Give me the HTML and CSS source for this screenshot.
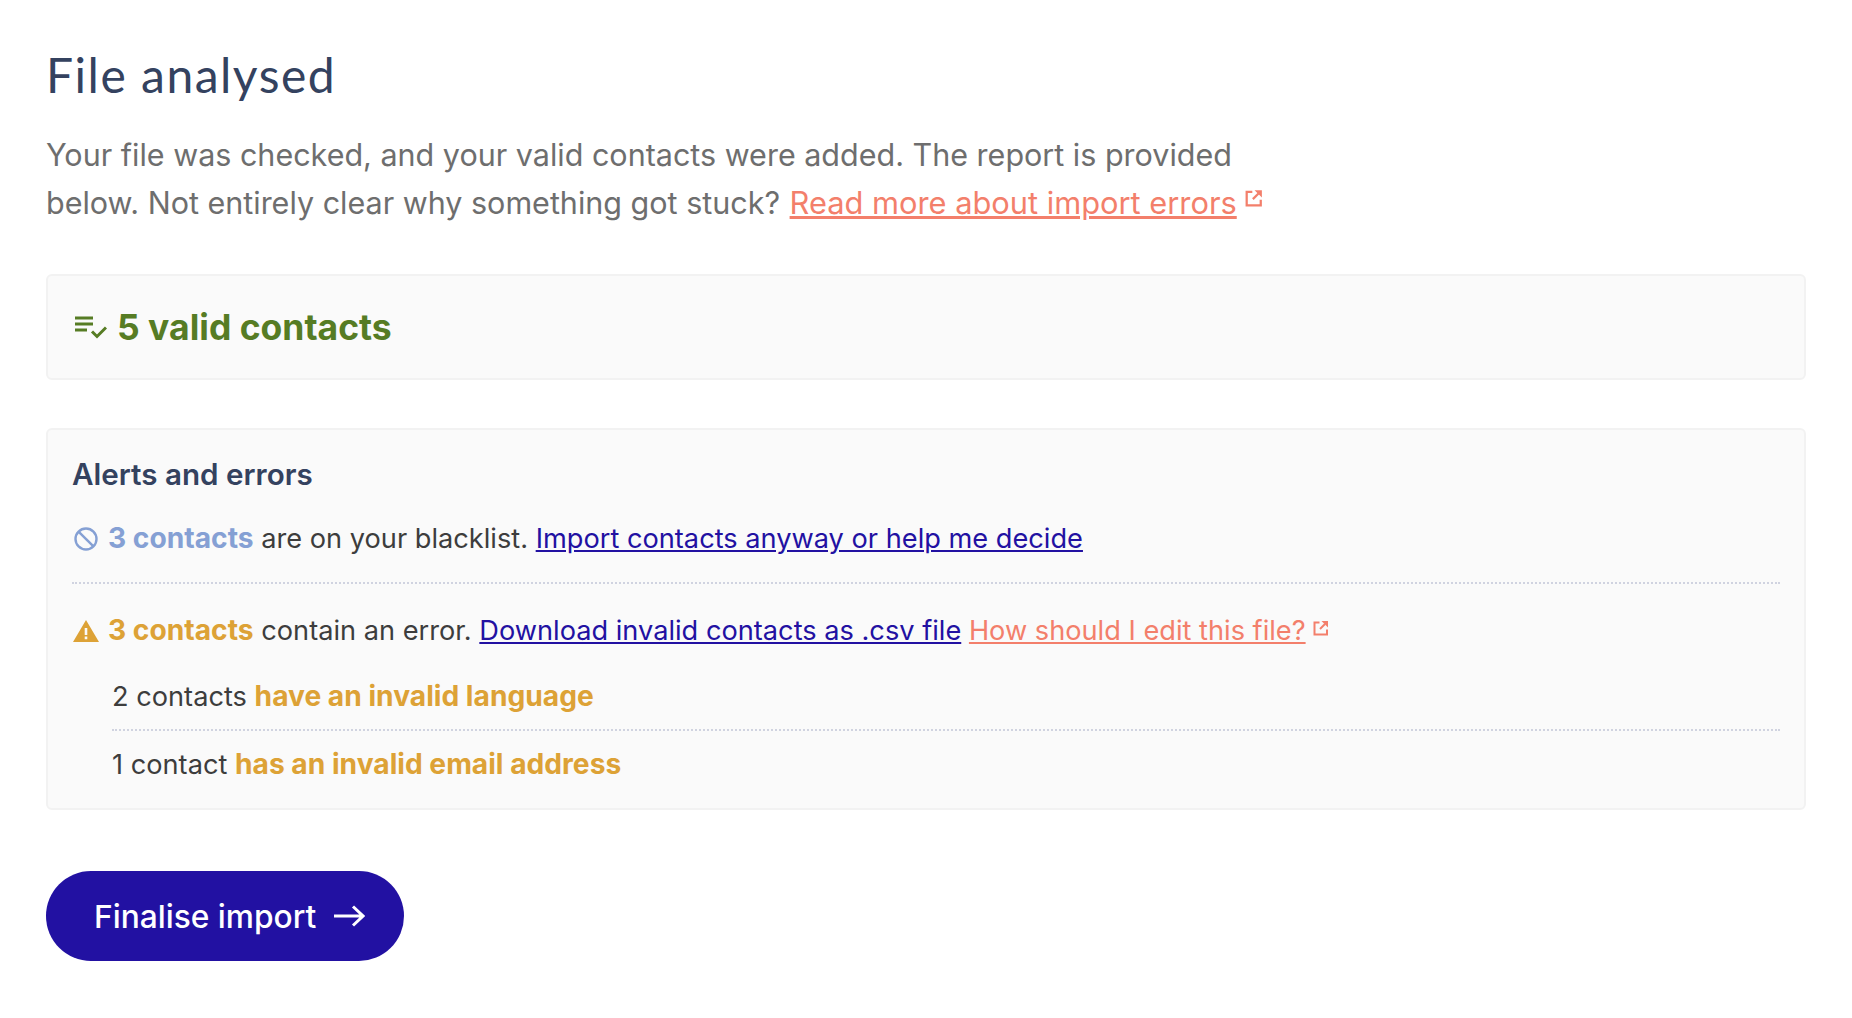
FILE: index.html
```html
<!DOCTYPE html>
<html lang="en">
<head>
    <meta charset="UTF-8" />
    <title>File analysed</title>
    <link rel="stylesheet" href="styles.css">
</head>
<body>
    <main class="page">
        <h1 class="title">File analysed</h1>
        <p class="intro">
            Your file was checked, and your valid contacts were added. The report is provided
            below. Not entirely clear why something got stuck?
            <a class="help-link help-link-big" href="#">Read more about import errors</a><svg class="ext ext-big" viewBox="0 0 16 16"><path d="M6.500 2.500H1.500V14.500H14V9.500" /><path class="ext-head" d="M8.500 1H15V7.500Z" /><path d="M12 4 7 9" /></svg>
        </p>

        <section class="card card-valid">
            <svg class="valid-icon" viewBox="0 0 32 24"><path d="M0 3h18M0 9h18M0 15h12M17 16.500l5 5 9-9" /></svg>
            <h2 class="valid-title">5 valid contacts</h2>
        </section>

        <section class="card card-alerts">
            <h3 class="alerts-title">Alerts and errors</h3>
            <div class="alert alert-block">
                <svg class="alert-icon" viewBox="0 0 24 24"><circle cx="12" cy="12" r="10.500" /><path d="M4.800 4.800l14.400 14.400" /></svg>
                <span><b class="blue">3 contacts</b> are on your blacklist. <a class="action" href="#">Import contacts anyway or help me decide</a></span>
            </div>
            <div class="alert">
                <svg class="alert-icon" viewBox="0 0 26 22"><path class="fill" d="M13 0 26 22H0ZM11.700 8v7h2.600V8ZM11.700 16.500v2.800h2.600v-2.800Z" /></svg>
                <span><b class="amber">3 contacts</b> contain an error. <a class="action" href="#">Download invalid contacts as .csv file</a> <a class="help-link" href="#">How should I edit this file?</a><svg class="ext" viewBox="0 0 16 16"><path d="M6.500 2.500H1.500V14.500H14V9.500" /><path class="ext-head" d="M8.500 1H15V7.500Z" /><path d="M12 4 7 9" /></svg></span>
            </div>
            <ul class="sublist">
                <li>2 contacts <b class="amber">have an invalid language</b></li>
                <li>1 contact <b class="amber">has an invalid email address</b></li>
            </ul>
        </section>

        <a class="finalise" href="#">
            Finalise import
            <svg class="arrow" viewBox="0 0 32 22"><path d="M1 11h29M20 1.500 30 11l-10 9.500" /></svg>
        </a>
    </main>
</body>
</html>
```

FILE: styles.css
```css
* {
    margin: 0;
    padding: 0;
    box-sizing: border-box;
}
body {
    background-color: #fff;
    font-family: Inter, "Liberation Sans", sans-serif;
    color: #3d3d3d;
}
.page {
    padding: 46px 46px 0;
}
.title {
    font-family: Lato, "Open Sans", sans-serif;
    font-size: 48px;
    line-height: 58px;
    font-weight: 400;
    letter-spacing: 1.5px;
    color: #34425f;
}
.intro {
    max-width: 1270px;
    margin-top: 27px;
    font-size: 30.5px;
    line-height: 48px;
    color: #6e6e6e;
}
.help-link {
    color: #f37f6b;
}
.help-link-big {
    margin-left: 1px;
    font-size: 30.8px;
}
.ext {
    width: 16px;
    height: 16px;
    margin-left: 7px;
    vertical-align: 4px;
    fill: none;
    stroke: #f37f6b;
    stroke-width: 2;
}
.ext-big {
    width: 18px;
    height: 18px;
    margin-left: 8px;
    vertical-align: 7px;
}
.ext-head {
    fill: #f37f6b;
    stroke: none;
}
.card {
    border: 2px solid #f2f2f2;
    border-radius: 6px;
    background-color: #fafafa;
}
.card-valid {
    display: flex;
    align-items: center;
    gap: 10px;
    height: 106px;
    margin-top: 47px;
    padding-left: 27px;
}
.valid-icon {
    width: 32px;
    height: 24px;
    fill: none;
    stroke: #567c24;
    stroke-width: 3;
}
.valid-title {
    font-size: 35.5px;
    font-weight: 700;
    color: #567c24;
}
.card-alerts {
    margin-top: 48px;
    padding: 25px 24px 0;
    height: 382px;
}
.alerts-title {
    font-size: 29.6px;
    line-height: 38px;
    font-weight: 600;
    color: #34425f;
}
.alert {
    display: flex;
    align-items: center;
    gap: 9px;
    font-size: 27.2px;
    line-height: 40px;
}
.alert-block {
    margin-top: 26px;
    padding-bottom: 23px;
    border-bottom: 2px dotted #d0d3e0;
    margin-bottom: 27px;
}
.alert-icon {
    width: 26px;
    height: 24px;
    margin-left: 1px;
    flex-shrink: 0;
    fill: none;
    stroke: #85a0d4;
    stroke-width: 2.400;
}
.alert-icon .fill {
    fill: #dda236;
    fill-rule: evenodd;
    stroke: none;
}
.blue {
    font-size: 28.2px;
    line-height: 1;
    font-weight: 700;
    color: #85a0d4;
}
.amber {
    font-size: 28.2px;
    line-height: 1;
    font-weight: 700;
    color: #dda236;
}
.action {
    color: #2211a2;
}
.sublist {
    list-style: none;
    margin-top: 14px;
    margin-left: 40px;
    font-size: 27.2px;
    line-height: 40px;
}
.sublist li {
    padding: 14px 0 8px;
}
.sublist li:first-child {
    border-bottom: 2px dotted #d0d3e0;
    padding-top: 12px;
    padding-bottom: 12px;
}
.finalise {
    display: inline-flex;
    align-items: center;
    gap: 17px;
    height: 90px;
    margin-top: 61px;
    padding: 0 39px 0 48px;
    border-radius: 45px;
    background-color: #2211a2;
    color: #fff;
    font-size: 31.7px;
    font-weight: 500;
    text-decoration: none;
}
.arrow {
    width: 32px;
    height: 22px;
    fill: none;
    stroke: #fff;
    stroke-width: 3;
}
```
